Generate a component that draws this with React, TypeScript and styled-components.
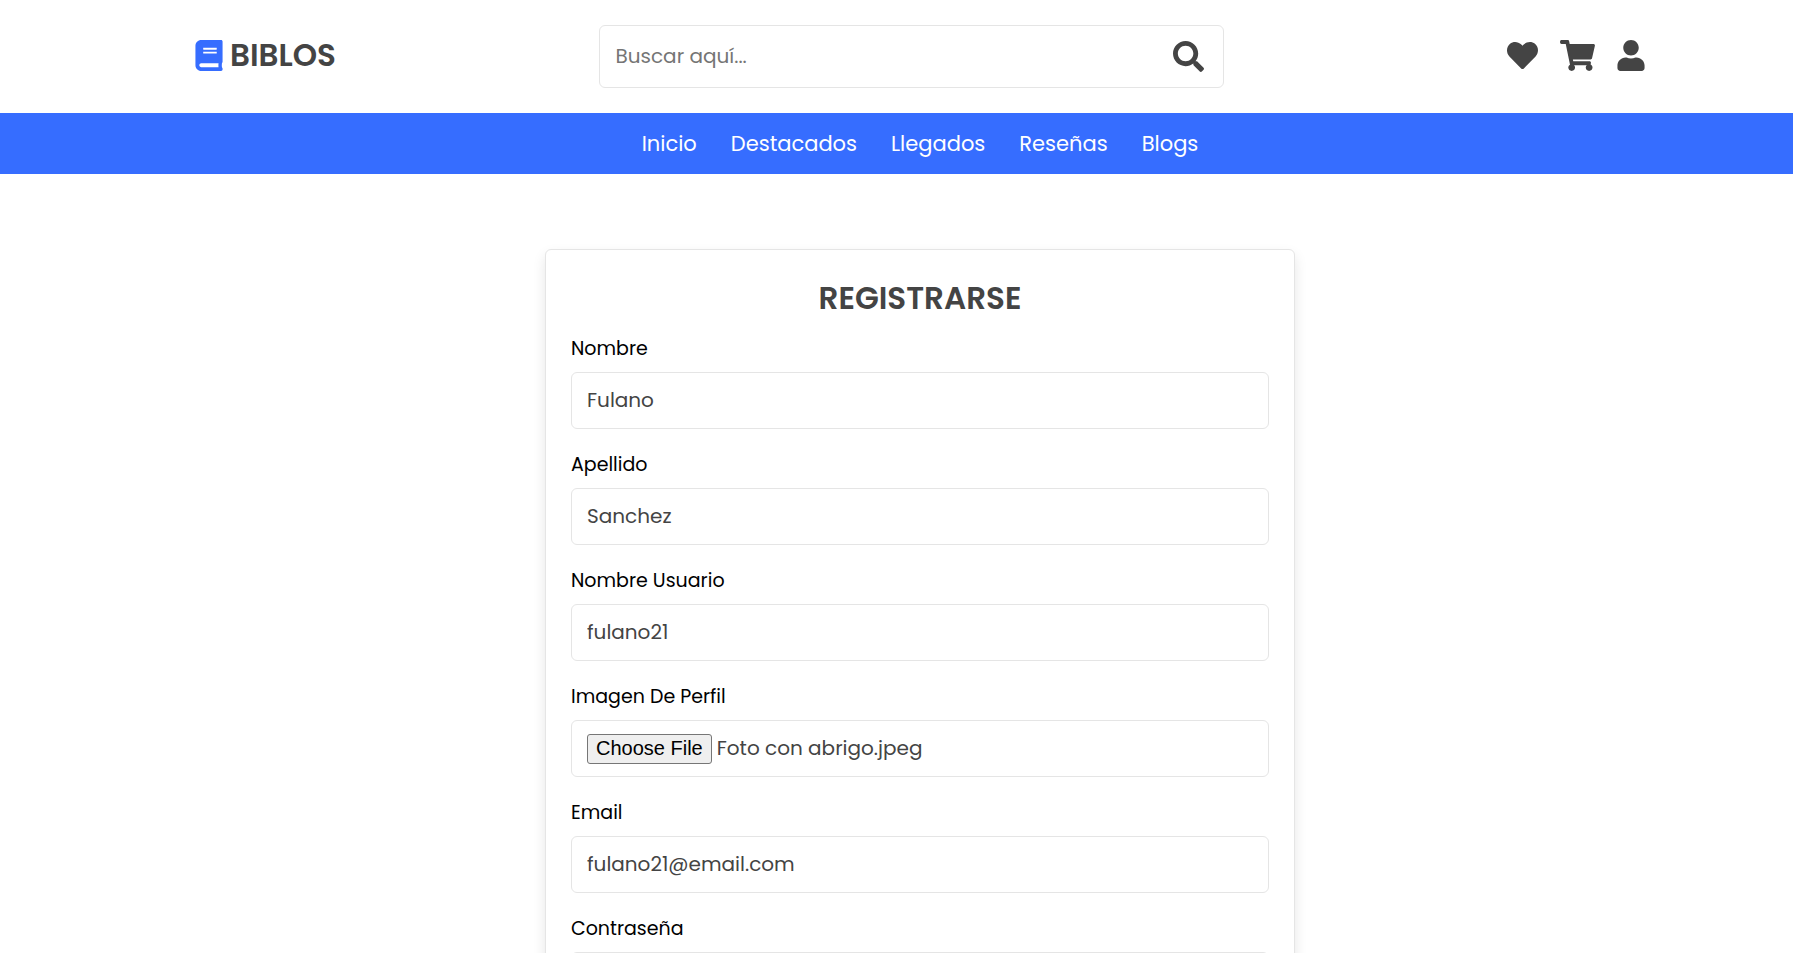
import React, { useEffect, useRef } from "react";
import styled, { createGlobalStyle } from "styled-components";
import { FaBook, FaHeart, FaSearch, FaShoppingCart, FaUser } from "react-icons/fa";

const GlobalStyle = createGlobalStyle`
  * { box-sizing: border-box; margin: 0; padding: 0; }
  html { scrollbar-width: none; }
  body {
    margin: 0;
    background: #fff;
    color: #444;
    font-family: Poppins, Inter, "Noto Sans", sans-serif;
  }
  a { color: inherit; text-decoration: none; }
`;

const Header = styled.header`
  display: flex;
  align-items: center;
  justify-content: space-between;
  padding: 25px 148px 25px 195px;
`;

const Logo = styled.a`
  display: flex;
  align-items: center;
  gap: 7px;
  padding-bottom: 2px;
  font-size: 31px;
  line-height: 47px;
  font-weight: 600;

  svg {
    width: 28px;
    height: 31px;
    color: #366dff;
  }
`;

const SearchForm = styled.form`
  display: flex;
  align-items: center;
  flex: 0 1 625px;
  height: 63px;
  padding: 0 19px 0 15px;
  border: 1px solid #e5e5e5;
  border-radius: 6px;
`;

const SearchInput = styled.input`
  flex: 1;
  min-width: 0;
  height: 100%;
  padding-bottom: 2px;
  border: 0;
  outline: 0;
  background: none;
  font-family: inherit;
  font-size: 20px;
  color: #444;

  &::placeholder { color: #757575; opacity: 1; }
`;

const IconButton = styled.button<{ $width?: number }>`
  display: flex;
  flex: none;
  border: 0;
  background: none;
  color: #444;
  cursor: pointer;

  svg {
    flex: none;
    width: ${({ $width = 31 }) => $width}px;
    height: 31px;
  }
`;

const Actions = styled.div`
  display: flex;
  align-items: center;
  flex: none;
  gap: 22px;
  padding: 0 0 2px 19px;
`;

const Nav = styled.nav`
  display: flex;
  justify-content: center;
  gap: 34px;
  padding: 15px 0 15px 47px;
  background: #366dff;
  color: #fff;
  font-size: 21px;
  line-height: 31px;
`;

const Main = styled.main`
  display: flex;
  justify-content: center;
  padding: 75px 0 75px 47px;
`;

const Card = styled.form`
  flex: 0 1 750px;
  padding: 25px;
  border: 1px solid #e5e5e5;
  border-radius: 6px;
  background: #fff;
  box-shadow: 0 6px 13px rgba(0, 0, 0, 0.1);
`;

const Title = styled.h1`
  margin-bottom: 14px;
  font-size: 31px;
  line-height: 46px;
  font-weight: 600;
  text-align: center;
  text-transform: uppercase;
`;

const Field = styled.div`
  margin-bottom: 22px;
`;

const Label = styled.label`
  display: block;
  margin-bottom: 9px;
  font-size: 19px;
  line-height: 28px;
  color: #000;
`;

const Input = styled.input`
  display: block;
  width: 100%;
  height: 57px;
  padding: 0 15px 2px;
  border: 1px solid #e5e5e5;
  border-radius: 6px;
  outline: 0;
  background: #fff;
  font-family: inherit;
  font-size: 20px;
  line-height: 30px;
  color: #444;

  &[type="file"] { padding: 12px 15px; }

  &::file-selector-button {
    height: 30px;
    margin-right: 5px;
    padding: 0 8px 2px;
    border: 1px solid #767676;
    border-radius: 3px;
    background: #efefef;
    color: #000;
    font-family: Arial, "Liberation Sans", sans-serif;
    font-size: 20px;
    line-height: 26px;
  }
`;

const links = ["Inicio", "Destacados", "Llegados", "Reseñas", "Blogs"];

interface FieldData {
  id: string;
  label: string;
  type: string;
  value?: string;
}

const fields: FieldData[] = [
  { id: "nombre", label: "Nombre", type: "text", value: "Fulano" },
  { id: "apellido", label: "Apellido", type: "text", value: "Sanchez" },
  { id: "usuario", label: "Nombre Usuario", type: "text", value: "fulano21" },
  { id: "imagen", label: "Imagen De Perfil", type: "file", value: "Foto con abrigo.jpeg" },
  { id: "email", label: "Email", type: "email", value: "fulano21@email.com" },
  { id: "password", label: "Contraseña", type: "password" },
];

function FileInput({ id, fileName }: { id: string; fileName: string }) {
  const ref = useRef<HTMLInputElement>(null);

  useEffect(() => {
    const transfer = new DataTransfer();
    transfer.items.add(new File([""], fileName, { type: "image/jpeg" }));
    if (ref.current) ref.current.files = transfer.files;
  }, [fileName]);

  return <Input ref={ref} id={id} type="file" accept="image/*" />;
}

export default function App() {
  return (
    <>
      <GlobalStyle />
      <Header>
        <Logo href="#">
          <FaBook />
          BIBLOS
        </Logo>
        <SearchForm role="search">
          <SearchInput type="search" aria-label="Buscar" placeholder="Buscar aquí..." />
          <IconButton type="button" aria-label="Buscar">
            <FaSearch />
          </IconButton>
        </SearchForm>
        <Actions>
          <IconButton type="button" aria-label="Favoritos"><FaHeart /></IconButton>
          <IconButton type="button" aria-label="Carrito" $width={35}><FaShoppingCart /></IconButton>
          <IconButton type="button" aria-label="Cuenta" $width={28}><FaUser /></IconButton>
        </Actions>
      </Header>
      <Nav>
        {links.map((link) => (
          <a key={link} href={`#${link.toLowerCase()}`}>{link}</a>
        ))}
      </Nav>
      <Main>
        <Card>
          <Title>Registrarse</Title>
          {fields.map(({ id, label, type, value }) => (
            <Field key={id}>
              <Label htmlFor={id}>{label}</Label>
              {type === "file" ? (
                <FileInput id={id} fileName={value ?? ""} />
              ) : (
                <Input id={id} type={type} defaultValue={value} />
              )}
            </Field>
          ))}
        </Card>
      </Main>
    </>
  );
}
